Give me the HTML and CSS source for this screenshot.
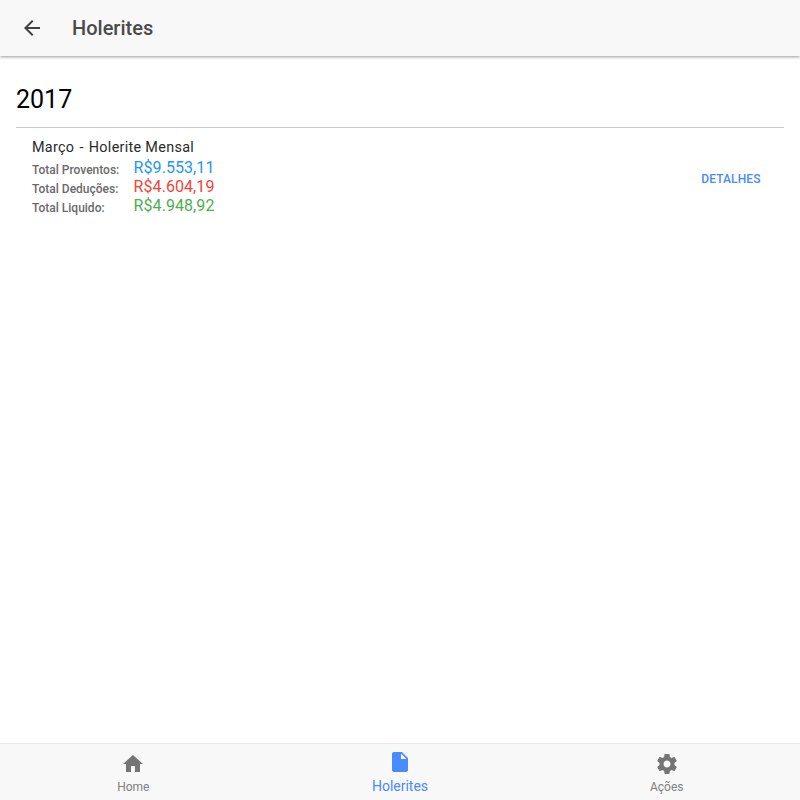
FILE: index.html
```html
<!DOCTYPE html>
<html lang="pt">
<head>
<meta charset="utf-8">
<title>Holerites</title>
<link rel="stylesheet" href="styles.css">
</head>
<body>
<div class="app">
  <header class="toolbar">
    <svg class="back" width="24" height="24" viewBox="0 0 24 24"><path d="M20 11H7.83l5.59-5.59L12 4l-8 8 8 8 1.41-1.41L7.83 13H20v-2z"/></svg>
    <div class="title">Holerites</div>
  </header>
  <main class="content">
    <h2 class="year">2017</h2>
    <div class="item">
      <div class="info">
        <div class="item-title">Março <span class="dash">-</span> Holerite Mensal</div>
        <div class="row"><span class="label">Total Proventos:</span><span class="value blue">R$9.553,11</span></div>
        <div class="row"><span class="label">Total Deduções:</span><span class="value red">R$4.604,19</span></div>
        <div class="row"><span class="label">Total Liquido:</span><span class="value green">R$4.948,92</span></div>
      </div>
      <button class="details">DETALHES</button>
    </div>
  </main>
  <nav class="tabs">
    <div class="tab">
      <svg class="tab-icon" width="24" height="24" viewBox="0 0 24 24"><path d="M10 20v-6h4v6h5v-8h3L12 3 2 12h3v8z"/></svg>
      <span class="tab-label">Home</span>
    </div>
    <div class="tab active">
      <svg class="tab-icon" width="24" height="24" viewBox="0 0 24 24"><path d="M6 2c-1.1 0-2 .9-2 2v16c0 1.1.9 2 2 2h12c1.1 0 2-.9 2-2V8l-6-6H6zm7 7V3.5L18.5 9H13z"/></svg>
      <span class="tab-label">Holerites</span>
    </div>
    <div class="tab">
      <svg class="tab-icon" width="24" height="24" viewBox="0 0 24 24"><path d="M19.43 12.98c.04-.32.07-.64.07-.98s-.03-.66-.07-.98l2.11-1.65c.19-.15.24-.42.12-.64l-2-3.46c-.12-.22-.39-.3-.61-.22l-2.49 1c-.52-.4-1.08-.73-1.69-.98l-.38-2.65C14.46 2.18 14.25 2 14 2h-4c-.25 0-.46.18-.49.42l-.38 2.65c-.61.25-1.17.59-1.69.98l-2.49-1c-.23-.09-.49 0-.61.22l-2 3.46c-.13.22-.07.49.12.64l2.11 1.65c-.04.32-.07.65-.07.98s.03.66.07.98l-2.11 1.65c-.19.15-.24.42-.12.64l2 3.46c.12.22.39.3.61.22l2.49-1c.52.4 1.08.73 1.69.98l.38 2.65c.03.24.24.42.49.42h4c.25 0 .46-.18.49-.42l.38-2.65c.61-.25 1.17-.59 1.69-.98l2.49 1c.23.09.49 0 .61-.22l2-3.46c.12-.22.07-.49-.12-.64l-2.11-1.65zM12 15.5c-1.93 0-3.5-1.57-3.5-3.5s1.57-3.5 3.5-3.5 3.5 1.57 3.5 3.5-1.57 3.5-3.5 3.5z"/></svg>
      <span class="tab-label">Ações</span>
    </div>
  </nav>
</div>
</body>
</html>
```
FILE: styles.css
```css
* { box-sizing: border-box; }
html, body { margin: 0; height: 100%; }
body { font-family: Roboto, "Noto Sans", sans-serif; background: #fff; color: #000; }
.app { display: flex; flex-direction: column; height: 800px; }
.toolbar {
  height: 56px;
  flex: none;
  display: flex;
  align-items: center;
  padding-left: 20px;
  background: #f8f8f8;
  box-shadow: 0 1px 3px rgba(0,0,0,.4);
  position: relative;
}
.back { fill: #424242; }
.title { margin-left: 28px; font-size: 20px; font-weight: 500; color: #4a4a4a; }
.content { flex: 1; padding: 29px 16px 0; }
.year { margin: 0; font-size: 25px; line-height: 30px; font-weight: 400; color: #000; padding-bottom: 12px; border-bottom: 1px solid #c8c8c8; }
.item { display: flex; justify-content: space-between; align-items: center; padding: 11px 23.5px 0 16px; }
.item-title { font-size: 14.4px; line-height: 18px; letter-spacing: .3px; color: #2a2a2a; margin-bottom: 2px; }
.dash { margin: 0 1.2px; }
.row { display: flex; align-items: center; height: 19px; }
.label { width: 101.6px; font-size: 12px; line-height: 19px; padding-top: 4px; font-weight: 500; color: #6a6a6a; }
.value { font-size: 16px; letter-spacing: .07px; padding-bottom: 2px; }
.blue { color: #2196f3; }
.red { color: #f44336; }
.green { color: #4caf50; }
.details { border: 0; background: none; padding: 3px 0 0; font: 500 12px Roboto, sans-serif; letter-spacing: .1px; color: #488aff; }
.tabs { height: 57px; flex: none; display: flex; background: #f8f8f8; border-top: 1px solid #e8e8e8; }
.tab { flex: 1; display: flex; flex-direction: column; align-items: center; padding-top: 8px; color: #808080; }
.tab-icon { fill: #757575; }
.tab-label { font-size: 12px; line-height: 14px; margin-top: 4px; }
.active { color: #488aff; }
.active .tab-icon { fill: #488aff; margin-top: -2px; }
.active .tab-label { font-size: 14px; line-height: 16px; margin-top: 4px; }
```
